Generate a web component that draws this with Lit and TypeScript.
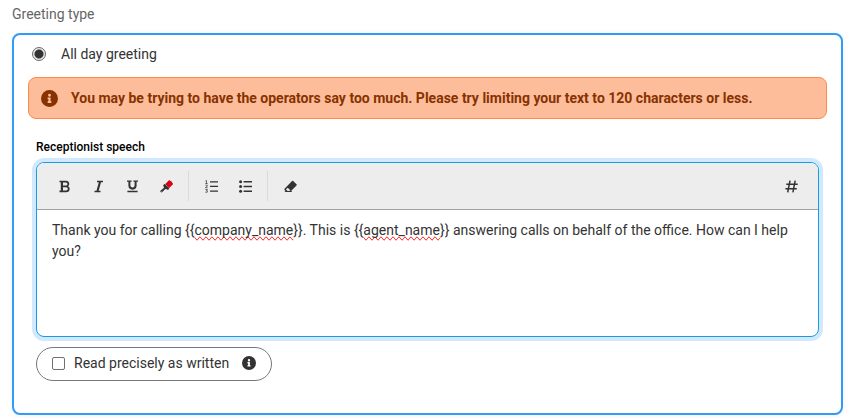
import { LitElement, html, css, svg } from "lit";
import { customElement, property } from "lit/decorators.js";

const infoIcon = svg`<path fill-rule="evenodd" d="M256 8a248 248 0 1 0 0 496 248 248 0 1 0 0-496zm0 110a42 42 0 1 1 0 84 42 42 0 1 1 0-84zm56 254c0 7-5 12-12 12h-88c-7 0-12-5-12-12v-24c0-7 5-12 12-12h12v-64h-12c-7 0-12-5-12-12v-24c0-7 5-12 12-12h64c7 0 12 5 12 12v100h12c7 0 12 5 12 12z"/>`;

const icons: Record<string, unknown> = {
  bold: svg`<path d="M1.500.7h6.800a3.200 3.200 0 0 1 1.900 5.600A3.200 3.200 0 0 1 8.500 12.200H1.500v-1.600h1.300V2.300H1.500zM5 2.400v3.100h2.900a1.500 1.500 0 0 0 0-3.100zM5 7.200v3.300h3.200a1.600 1.600 0 0 0 0-3.300z" fill-rule="evenodd"/>`,
  italic: svg`<path d="M5 .7h6v1.500H9L6.700 10.700h1.800v1.500H2.500v-1.500h2L6.800 2.200H5z"/>`,
  underline: svg`<path d="M1 .5h4.600v1.300H4.400v3.700a2.100 2.100 0 0 0 4.200 0V1.800H7.400V.5H12v1.300h-1.400v3.800a4.100 4.100 0 0 1-8.200 0V1.800H1zM1.400 10.800h10.200v1.500H1.400z"/>`,
  brush: svg`<path fill="#dc0514" d="M5.300 3.900 9.200 0l1 1 .7-.3 2.300 3.200-4.200 4.300z"/><path d="M4.700 3.800 9.300 8.400 8 9.900 6.600 9.300 5.300 8.900 2.400 12.100Q1.400 12.900.6 12.100T.7 10.400L4 7.700 3.500 6.300 3.200 5.200zM1.300 10.900v.7h.8v-.7z" fill-rule="evenodd"/>`,
  ordered: svg`<path d="M5 1.200h8v1.300H5zM5 5.800h8v1.300H5zM5 10.400h8v1.300H5z"/><path d="M.4 1 1.500.5v3M.3 3.500h2.400M.4 5.200h1.900v1L.4 7.700h2.300M.4 9.500h2L1.500 10.700h.8v1.500H.3" fill="none" stroke="currentColor" stroke-width=".7"/>`,
  bullets: svg`<circle cx="1.600" cy="1.800" r="1.500"/><circle cx="1.600" cy="6.500" r="1.500"/><circle cx="1.600" cy="11.200" r="1.500"/><path d="M4.600 1.100H13v1.400H4.600zM4.600 5.800H13v1.400H4.600zM4.600 10.500H13v1.400H4.600z"/>`,
  eraser: svg`<path fill-rule="evenodd" d="M8 1q.6-.6 1.200 0l3.300 3.200q.6.600 0 1.200L6.800 11.200H8v.9H.8v-.9h.9L.6 10q-.6-.6 0-1.200zM3.700 7.700 2 9.500 3.600 11.100h1.500L6.300 10.200z"/>`,
  hash: svg`<path d="M5 .7 2.700 12.300M10.200.7 7.900 12.300M1.300 4.200h11.400M.4 8.800h11.400" fill="none" stroke="currentColor" stroke-width="1.500"/>`,
};

@customElement("info-icon")
class InfoIcon extends LitElement {
  static styles = css`
    :host { display: block; flex: none; width: 14px; height: 14px; }
    svg { display: block; width: 100%; height: 100%; fill: currentColor; }
  `;
  render() {
    return html`<svg viewBox="8 8 496 496" aria-hidden="true">${infoIcon}</svg>`;
  }
}

@customElement("tool-button")
class ToolButton extends LitElement {
  @property() icon = "";
  @property() label = "";

  static styles = css`
    :host { display: block; flex: none; }
    button {
      display: flex;
      align-items: center;
      justify-content: center;
      width: 34px;
      height: 30px;
      padding: 0;
      border: 0;
      border-radius: 4px;
      background: none;
      color: #333;
    }
    svg { display: block; width: 13px; height: 13px; fill: currentColor; overflow: visible; }
  `;
  render() {
    return html`<button type="button" title=${this.label} aria-label=${this.label}>
      <svg viewBox="0 0 13 13" aria-hidden="true">${icons[this.icon]}</svg>
    </button>`;
  }
}

@customElement("speech-editor")
class SpeechEditor extends LitElement {
  static styles = css`
    :host { display: block; }
    .editor {
      border: 1px solid #1a9be0;
      border-radius: 8px;
      box-shadow: 0 0 0 4px #d1e9ff;
      overflow: hidden;
      background: #fff;
    }
    .toolbar {
      display: flex;
      align-items: center;
      height: 46px;
      padding: 0 10px;
      background: #ededed;
      border-bottom: 1px solid #a3a3a3;
    }
    .group { display: flex; }
    .group + .group { margin-left: 5px; padding-left: 5px; border-left: 1px solid #dadada; }
    .end { margin-left: auto; }
    .text {
      min-height: 106px;
      padding: 10px 15px;
      outline: none;
      font-size: 14px;
      line-height: 21px;
      color: #333;
    }
    .misspelt { text-decoration: spelling-error; }
  `;
  render() {
    return html`<div class="editor">
      <div class="toolbar" role="toolbar" aria-label="Formatting">
        <div class="group">
          <tool-button icon="bold" label="Bold"></tool-button>
          <tool-button icon="italic" label="Italic"></tool-button>
          <tool-button icon="underline" label="Underline"></tool-button>
          <tool-button icon="brush" label="Text colour"></tool-button>
        </div>
        <div class="group">
          <tool-button icon="ordered" label="Numbered list"></tool-button>
          <tool-button icon="bullets" label="Bulleted list"></tool-button>
        </div>
        <div class="group">
          <tool-button icon="eraser" label="Clear formatting"></tool-button>
        </div>
        <tool-button class="end" icon="hash" label="Insert variable"></tool-button>
      </div>
      <div class="text" contenteditable="true" role="textbox" aria-multiline="true" aria-label="Receptionist speech" spellcheck="false">Thank you for calling {{<span class="misspelt">company_name</span>}}. This is {{<span class="misspelt">agent_name</span>}} answering calls on behalf of the office. How can I help you?</div>
    </div>`;
  }
}

@customElement("app-root")
class AppRoot extends LitElement {
  static styles = css`
    :host {
      display: block;
      padding: 4px 8px 4px 12px;
      background: #fff;
      font-family: Roboto, "Liberation Sans", sans-serif;
      font-size: 14px;
      line-height: 21px;
      color: #333;
    }
    .heading { margin: 0 0 8px; font-size: 14px; font-weight: 400; color: #666; }
    .card {
      padding: 8px 14px 32px;
      border: 2px solid #309bf9;
      border-radius: 8px;
      box-shadow: 0 1px 6px #0000000f;
      background: #fff;
    }
    .choice { display: flex; align-items: center; gap: 15px; padding-left: 4px; height: 22px; }
    input { margin: 0; flex: none; }
    .radio {
      appearance: none;
      box-sizing: border-box;
      width: 14px;
      height: 14px;
      border: 1px solid #6b6b6b;
      border-radius: 50%;
      background: radial-gradient(circle, #333 4px, #e6e6e6 5px);
    }
    .alert {
      display: flex;
      align-items: center;
      gap: 13px;
      margin-top: 12px;
      padding: 9px 12px;
      min-height: 22px;
      border: 1px solid #ff8a47;
      border-radius: 8px;
      background: #fdbd9b;
      color: #873200;
      font-weight: 700;
    }
    .alert info-icon { width: 17px; height: 17px; }
    .field { padding: 19px 8px 0; }
    .label { display: block; margin-bottom: 6px; font-size: 12px; line-height: 18px; font-weight: 500; color: #000; }
    .precise {
      display: inline-flex;
      align-items: center;
      gap: 9px;
      margin-top: 10px;
      padding: 4px 15px 6px;
      min-height: 22px;
      border: 1px solid #777;
      border-radius: 17px;
      vertical-align: top;
    }
    .check {
      appearance: none;
      box-sizing: border-box;
      width: 13px;
      height: 13px;
      border: 1px solid #707070;
      border-radius: 2px;
      background: #fff;
    }
    .precise info-icon { margin-left: 4px; }
  `;
  render() {
    return html`
      <h2 class="heading">Greeting type</h2>
      <section class="card">
        <label class="choice">
          <input class="radio" type="radio" name="greeting" checked />
          <span>All day greeting</span>
        </label>
        <div class="alert" role="alert">
          <info-icon></info-icon>
          <span>You may be trying to have the operators say too much. Please try limiting your text to 120 characters or less.</span>
        </div>
        <div class="field">
          <span class="label">Receptionist speech</span>
          <speech-editor></speech-editor>
          <label class="precise">
            <input class="check" type="checkbox" />
            <span>Read precisely as written</span>
            <info-icon></info-icon>
          </label>
        </div>
      </section>
    `;
  }
}
